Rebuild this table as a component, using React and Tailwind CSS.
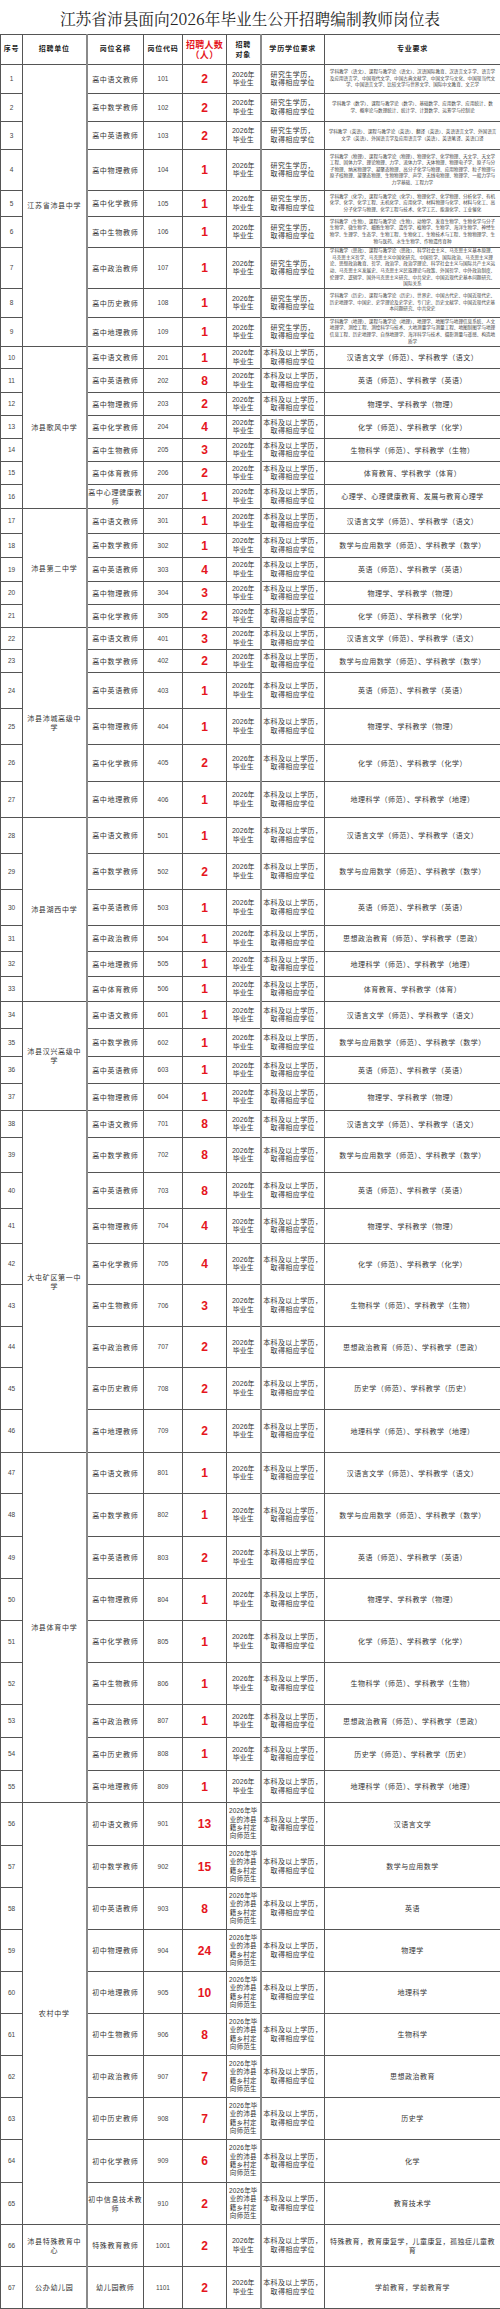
import React from "react"

const PG = "研究生学历，"
const UG = "本科及以上学历，"

const groups = [
  {
    unit: ["江苏省沛县中学"],
    rows: [
      { no: 1, name: ["高中语文教师"], code: "101", n: "2", edu: PG, h: "h-[29px]", small: "学科教学（语文）、课程与教学论（语文）、汉语国际教育、汉语言文字学、语言学及应用语言学、中国现代文学、中国古典文献学、中国文学与文化、中国现当代文学、中国语言文学、比较文学与世界文学、国际中文教育、文艺学" },
      { no: 2, name: ["高中数学教师"], code: "102", n: "2", edu: PG, h: "h-[28px]", small: "学科教学（数学）、课程与教学论（数学）、基础数学、应用数学、应用统计、数学、概率论与数理统计、统计学、计算数学、运筹学与控制论" },
      { no: 3, name: ["高中英语教师"], code: "103", n: "2", edu: PG, h: "h-[28px]", small: "学科教学（英语）、课程与教学论（英语）、翻译（英语）、英语语言文学、外国语言文学（英语）、外国语言学及应用语言学（英语）、英语笔译、英语口译" },
      { no: 4, name: ["高中物理教师"], code: "104", n: "1", edu: PG, h: "h-[41px]", small: "学科教学（物理）、课程与教学论（物理）、物理化学、化学物理、天文学、天文学工程、固体力学、理论物理、力学、流体力学、天体物理、物理电子学、原子与分子物理、纳米物理学、凝聚态物理、高分子化学与物理、应用物理学、粒子物理与原子核物理、凝聚态物理、生物物理学、声学、无线电物理、物理学、一般力学与力学基础、工程力学" },
      { no: 5, name: ["高中化学教师"], code: "105", n: "1", edu: PG, h: "h-[26px]", small: "学科教学（化学）、课程与教学论（化学）、物理化学、化学物理、分析化学、有机化学、化学、化学工程、无机化学、应用化学、材料物理与化学、材料与化工、高分子化学与物理、化学工程与技术、化学工艺、能源化学、工业催化" },
      { no: 6, name: ["高中生物教师"], code: "106", n: "1", edu: PG, h: "h-[31px]", small: "学科教学（生物）、课程与教学论（生物）、动物学、发育生物学、生物化学与分子生物学、微生物学、细胞生物学、遗传学、植物学、生物学、海洋生物学、神经生物学、生理学、生态学、生物工程、生物化工、生物技术与工程、生物物理学、生物与医药、水生生物学、作物遗传育种" },
      { no: 7, name: ["高中政治教师"], code: "107", n: "1", edu: PG, h: "h-[41px]", small: "学科教学（思政）、课程与教学论（思政）、科学社会主义、马克思主义基本原理、马克思主义哲学、马克思主义中国化研究、中国哲学、国际政治、马克思主义理论、思想政治教育、哲学、政治学、政治学理论、科学社会主义与国际共产主义运动、马克思主义发展史、马克思主义民族理论与政策、外国哲学、中外政治制度、伦理学、逻辑学、国外马克思主义研究、中共党史、中国近现代史基本问题研究、国际关系" },
      { no: 8, name: ["高中历史教师"], code: "108", n: "1", edu: PG, h: "h-[29px]", small: "学科教学（历史）、课程与教学论（历史）、世界史、中国古代史、中国近现代史、历史地理学、中国史、史学理论及史学史、专门史、历史文献学、中国近现代史基本问题研究、中共党史" },
      { no: 9, name: ["高中地理教师"], code: "109", n: "1", edu: PG, h: "h-[29px]", small: "学科教学（地理）、课程与教学论（地理）、地理学、地图学与地理信息系统、人文地理学、测绘工程、测绘科学与技术、大地测量学与测量工程、地图制图学与地理信息工程、历史地理学、自然地理学、海洋科学与技术、摄影测量与遥感、构造地质学" },
    ],
  },
  {
    unit: ["沛县歌风中学"],
    rows: [
      { no: 10, name: ["高中语文教师"], code: "201", n: "1", h: "h-[22px]", major: ["汉语言文学（师范）、学科教学（语文）"] },
      { no: 11, name: ["高中英语教师"], code: "202", n: "8", h: "h-[24px]", major: ["英语（师范）、学科教学（英语）"] },
      { no: 12, name: ["高中物理教师"], code: "203", n: "2", h: "h-[23px]", major: ["物理学、学科教学（物理）"] },
      { no: 13, name: ["高中化学教师"], code: "204", n: "4", h: "h-[23px]", major: ["化学（师范）、学科教学（化学）"] },
      { no: 14, name: ["高中生物教师"], code: "205", n: "3", h: "h-[23px]", major: ["生物科学（师范）、学科教学（生物）"] },
      { no: 15, name: ["高中体育教师"], code: "206", n: "2", h: "h-[23px]", major: ["体育教育、学科教学（体育）"] },
      { no: 16, name: ["高中心理健康教", "师"], code: "207", n: "1", h: "h-[24px]", major: ["心理学、心理健康教育、发展与教育心理学"] },
    ],
  },
  {
    unit: ["沛县第二中学"],
    rows: [
      { no: 17, name: ["高中语文教师"], code: "301", n: "1", h: "h-[25px]", major: ["汉语言文学（师范）、学科教学（语文）"] },
      { no: 18, name: ["高中数学教师"], code: "302", n: "1", h: "h-[24px]", major: ["数学与应用数学（师范）、学科教学（数学）"] },
      { no: 19, name: ["高中英语教师"], code: "303", n: "4", h: "h-[24px]", major: ["英语（师范）、学科教学（英语）"] },
      { no: 20, name: ["高中物理教师"], code: "304", n: "3", h: "h-[23px]", major: ["物理学、学科教学（物理）"] },
      { no: 21, name: ["高中化学教师"], code: "305", n: "2", h: "h-[23px]", major: ["化学（师范）、学科教学（化学）"] },
    ],
  },
  {
    unit: ["沛县沛城高级中", "学"],
    rows: [
      { no: 22, name: ["高中语文教师"], code: "401", n: "3", h: "h-[22px]", major: ["汉语言文学（师范）、学科教学（语文）"] },
      { no: 23, name: ["高中数学教师"], code: "402", n: "2", h: "h-[23px]", major: ["数学与应用数学（师范）、学科教学（数学）"] },
      { no: 24, name: ["高中英语教师"], code: "403", n: "1", h: "h-[36px]", major: ["英语（师范）、学科教学（英语）"] },
      { no: 25, name: ["高中物理教师"], code: "404", n: "1", h: "h-[36px]", major: ["物理学、学科教学（物理）"] },
      { no: 26, name: ["高中化学教师"], code: "405", n: "2", h: "h-[37px]", major: ["化学（师范）、学科教学（化学）"] },
      { no: 27, name: ["高中地理教师"], code: "406", n: "1", h: "h-[36px]", major: ["地理科学（师范）、学科教学（地理）"] },
    ],
  },
  {
    unit: ["沛县湖西中学"],
    rows: [
      { no: 28, name: ["高中语文教师"], code: "501", n: "1", h: "h-[36px]", major: ["汉语言文学（师范）、学科教学（语文）"] },
      { no: 29, name: ["高中数学教师"], code: "502", n: "2", h: "h-[36px]", major: ["数学与应用数学（师范）、学科教学（数学）"] },
      { no: 30, name: ["高中英语教师"], code: "503", n: "1", h: "h-[36px]", major: ["英语（师范）、学科教学（英语）"] },
      { no: 31, name: ["高中政治教师"], code: "504", n: "1", h: "h-[26px]", major: ["思想政治教育（师范）、学科教学（思政）"] },
      { no: 32, name: ["高中地理教师"], code: "505", n: "1", h: "h-[25px]", major: ["地理科学（师范）、学科教学（地理）"] },
      { no: 33, name: ["高中体育教师"], code: "506", n: "1", h: "h-[25px]", major: ["体育教育、学科教学（体育）"] },
    ],
  },
  {
    unit: ["沛县汉兴高级中", "学"],
    rows: [
      { no: 34, name: ["高中语文教师"], code: "601", n: "1", h: "h-[27px]", major: ["汉语言文学（师范）、学科教学（语文）"] },
      { no: 35, name: ["高中数学教师"], code: "602", n: "1", h: "h-[28px]", major: ["数学与应用数学（师范）、学科教学（数学）"] },
      { no: 36, name: ["高中英语教师"], code: "603", n: "1", h: "h-[27px]", major: ["英语（师范）、学科教学（英语）"] },
      { no: 37, name: ["高中物理教师"], code: "604", n: "1", h: "h-[27px]", major: ["物理学、学科教学（物理）"] },
    ],
  },
  {
    unit: ["大屯矿区第一中", "学"],
    rows: [
      { no: 38, name: ["高中语文教师"], code: "701", n: "8", h: "h-[27px]", major: ["汉语言文学（师范）、学科教学（语文）"] },
      { no: 39, name: ["高中数学教师"], code: "702", n: "8", h: "h-[35px]", major: ["数学与应用数学（师范）、学科教学（数学）"] },
      { no: 40, name: ["高中英语教师"], code: "703", n: "8", h: "h-[36px]", major: ["英语（师范）、学科教学（英语）"] },
      { no: 41, name: ["高中物理教师"], code: "704", n: "4", h: "h-[35px]", major: ["物理学、学科教学（物理）"] },
      { no: 42, name: ["高中化学教师"], code: "705", n: "4", h: "h-[41px]", major: ["化学（师范）、学科教学（化学）"] },
      { no: 43, name: ["高中生物教师"], code: "706", n: "3", h: "h-[42px]", major: ["生物科学（师范）、学科教学（生物）"] },
      { no: 44, name: ["高中政治教师"], code: "707", n: "2", h: "h-[41px]", major: ["思想政治教育（师范）、学科教学（思政）"] },
      { no: 45, name: ["高中历史教师"], code: "708", n: "2", h: "h-[42px]", major: ["历史学（师范）、学科教学（历史）"] },
      { no: 46, name: ["高中地理教师"], code: "709", n: "2", h: "h-[43px]", major: ["地理科学（师范）、学科教学（地理）"] },
    ],
  },
  {
    unit: ["沛县体育中学"],
    rows: [
      { no: 47, name: ["高中语文教师"], code: "801", n: "1", h: "h-[41px]", major: ["汉语言文学（师范）、学科教学（语文）"] },
      { no: 48, name: ["高中数学教师"], code: "802", n: "1", h: "h-[43px]", major: ["数学与应用数学（师范）、学科教学（数学）"] },
      { no: 49, name: ["高中英语教师"], code: "803", n: "2", h: "h-[42px]", major: ["英语（师范）、学科教学（英语）"] },
      { no: 50, name: ["高中物理教师"], code: "804", n: "1", h: "h-[42px]", major: ["物理学、学科教学（物理）"] },
      { no: 51, name: ["高中化学教师"], code: "805", n: "1", h: "h-[42px]", major: ["化学（师范）、学科教学（化学）"] },
      { no: 52, name: ["高中生物教师"], code: "806", n: "1", h: "h-[42px]", major: ["生物科学（师范）、学科教学（生物）"] },
      { no: 53, name: ["高中政治教师"], code: "807", n: "1", h: "h-[33px]", major: ["思想政治教育（师范）、学科教学（思政）"] },
      { no: 54, name: ["高中历史教师"], code: "808", n: "1", h: "h-[33px]", major: ["历史学（师范）、学科教学（历史）"] },
      { no: 55, name: ["高中地理教师"], code: "809", n: "1", h: "h-[32px]", major: ["地理科学（师范）、学科教学（地理）"] },
    ],
  },
  {
    unit: ["农村中学"],
    rural: true,
    rows: [
      { no: 56, name: ["初中语文教师"], code: "901", n: "13", h: "h-[43px]", major: ["汉语言文学"] },
      { no: 57, name: ["初中数学教师"], code: "902", n: "15", h: "h-[42px]", major: ["数学与应用数学"] },
      { no: 58, name: ["初中英语教师"], code: "903", n: "8", h: "h-[42px]", major: ["英语"] },
      { no: 59, name: ["初中物理教师"], code: "904", n: "24", h: "h-[42px]", major: ["物理学"] },
      { no: 60, name: ["初中地理教师"], code: "905", n: "10", h: "h-[42px]", major: ["地理科学"] },
      { no: 61, name: ["初中生物教师"], code: "906", n: "8", h: "h-[42px]", major: ["生物科学"] },
      { no: 62, name: ["初中政治教师"], code: "907", n: "7", h: "h-[42px]", major: ["思想政治教育"] },
      { no: 63, name: ["初中历史教师"], code: "908", n: "7", h: "h-[42px]", major: ["历史学"] },
      { no: 64, name: ["初中化学教师"], code: "909", n: "6", h: "h-[43px]", major: ["化学"] },
      { no: 65, name: ["初中信息技术教", "师"], code: "910", n: "2", h: "h-[42px]", major: ["教育技术学"] },
    ],
  },
  {
    unit: ["沛县特殊教育中", "心"],
    rows: [
      { no: 66, name: ["特殊教育教师"], code: "1001", n: "2", h: "h-[42px]", major: ["特殊教育，教育康复学，儿童康复，孤独症儿童教", "育"] },
    ],
  },
  {
    unit: ["公办幼儿园"],
    rows: [
      { no: 67, name: ["幼儿园教师"], code: "1101", n: "2", h: "h-[42px]", major: ["学前教育，学前教育学"] },
    ],
  },
]

const Lines = ({ items }) =>
  items.map((t, i) => (
    <React.Fragment key={i}>
      {i > 0 && <br />}
      {t}
    </React.Fragment>
  ))

const td = "border border-[#555] p-0 text-center align-middle"
const grey = "border-l-2 border-l-[#8a8a8a]"

export default function App() {
  return (
    <div className="w-[500px] bg-white text-[#333] font-['Liberation_Sans','Noto_Sans_CJK_SC',sans-serif]">
      <div className="h-[34px] pt-[4px] flex items-center justify-center text-[15.7px] text-[#222] font-['Noto_Serif_CJK_SC','Noto_Sans_CJK_SC',serif]">
        江苏省沛县面向2026年毕业生公开招聘编制教师岗位表
      </div>
      <table className="w-[500px] table-fixed border-collapse border border-[#333]">
        <colgroup>
          <col className="w-[22px]" />
          <col className="w-[64px]" />
          <col className="w-[57px]" />
          <col className="w-[39px]" />
          <col className="w-[44px]" />
          <col className="w-[34px]" />
          <col className="w-[64px]" />
          <col className="w-[176px]" />
        </colgroup>
        <thead>
          <tr className="h-[30px] text-[7px] font-bold tracking-[0.8px] text-[#222]">
            <th className={td}>序号</th>
            <th className={td}>招聘单位</th>
            <th className={`${td} ${grey}`}>岗位名称</th>
            <th className={td}>岗位代码</th>
            <th className={`${td} text-[9px] leading-[10px] text-[#e5161d] tracking-[0.3px]`}>
              招聘人数
              <br />
              （人）
            </th>
            <th className={`${td} leading-[9.5px]`}>
              招聘
              <br />
              对象
            </th>
            <th className={`${td} ${grey}`}>学历学位要求</th>
            <th className={td}>专业要求</th>
          </tr>
        </thead>
        <tbody>
          {groups.flatMap((g) =>
            g.rows.map((r, i) => (
              <tr key={r.no} className={r.h}>
                <td className={`${td} text-[6.5px] text-[#444]`}>{r.no}</td>
                {i === 0 && (
                  <td rowSpan={g.rows.length} className={`${td} text-[7px] leading-[9px] tracking-[0.7px]`}>
                    <Lines items={g.unit} />
                  </td>
                )}
                <td className={`${td} ${grey} text-[7px] leading-[9px] tracking-[0.7px]`}>
                  <Lines items={r.name} />
                </td>
                <td className={`${td} text-[6.5px] text-[#444]`}>{r.code}</td>
                <td className={`${td} text-[12px] font-bold text-[#e5161d]`}>{r.n}</td>
                {g.rural ? (
                  <td className={`${td} text-[6.5px] leading-[8.4px] tracking-[0.2px]`}>
                    2026年毕
                    <br />
                    业的沛县
                    <br />
                    籍乡村定
                    <br />
                    向师范生
                  </td>
                ) : (
                  <td className={`${td} text-[7px] leading-[8.5px]`}>
                    2026年
                    <br />
                    毕业生
                  </td>
                )}
                <td className={`${td} ${grey} text-[7px] leading-[8.5px] tracking-[0.4px]`}>
                  {r.edu === PG ? PG : UG}
                  <br />
                  取得相应学位
                </td>
                {r.small ? (
                  <td className={`${td} px-[3px] text-[4.6px] leading-[6.6px] text-[#444]`}>{r.small}</td>
                ) : (
                  <td className={`${td} text-[7px] leading-[9px] tracking-[0.5px]`}>
                    <Lines items={r.major} />
                  </td>
                )}
              </tr>
            ))
          )}
        </tbody>
      </table>
    </div>
  )
}
